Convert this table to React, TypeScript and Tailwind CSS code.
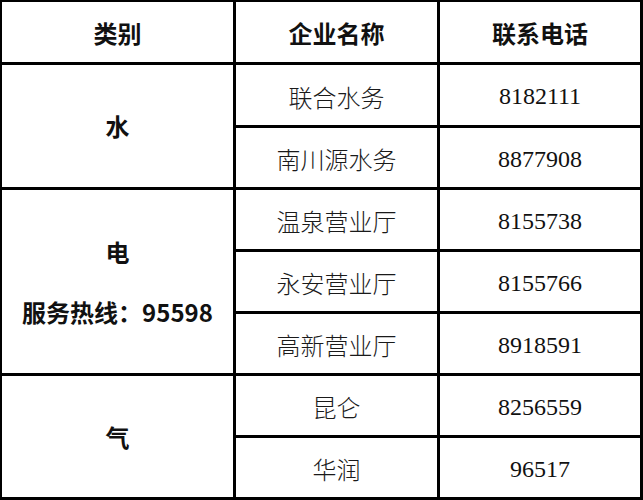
import React from "react";

function Cell({ children, className = "" }: { children: React.ReactNode; className?: string }) {
  return (
    <div className={`bg-white flex items-center justify-center text-[24px] leading-none text-[#111] ${className}`}>
      {children}
    </div>
  );
}

const Name = ({ t }: { t: string }) => (
  <Cell>
    <span className="font-light text-[#1a1a1a] pt-[3px]">{t}</span>
  </Cell>
);

const Tel = ({ t }: { t: string }) => (
  <Cell>
    <span className="font-['Liberation_Serif'] font-normal pt-[2px]">{t}</span>
  </Cell>
);

export default function App() {
  return (
    <div className="w-[643px] h-[500px] bg-white">
      <div className="grid w-[643px] h-[500px] bg-black pt-[2px] pl-[2px] pr-[3px] pb-[3px] gap-[3px] grid-cols-[231px_201px_200px] grid-rows-[60px_60px_59px_59px_59px_59px_59px_59px] font-['Noto_Sans_CJK_SC']">
        <Cell className="font-bold"><span className="pt-[2px]">类别</span></Cell>
        <Cell className="font-bold"><span className="pt-[2px]">企业名称</span></Cell>
        <Cell className="font-bold"><span className="pt-[2px]">联系电话</span></Cell>

        <Cell className="row-span-2 font-bold"><span>水</span></Cell>
        <Name t="联合水务" />
        <Tel t="8182111" />
        <Name t="南川源水务" />
        <Tel t="8877908" />

        <Cell className="row-span-3 font-bold">
          <div className="flex flex-col items-center gap-[36px]">
            <span>电</span>
            <span>服务热线：95598</span>
          </div>
        </Cell>
        <Name t="温泉营业厅" />
        <Tel t="8155738" />
        <Name t="永安营业厅" />
        <Tel t="8155766" />
        <Name t="高新营业厅" />
        <Tel t="8918591" />

        <Cell className="row-span-2 font-bold"><span>气</span></Cell>
        <Name t="昆仑" />
        <Tel t="8256559" />
        <Name t="华润" />
        <Tel t="96517" />
      </div>
    </div>
  );
}
